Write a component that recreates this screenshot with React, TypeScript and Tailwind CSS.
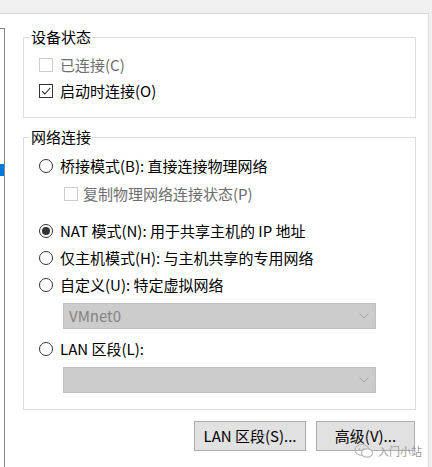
import React from "react";

const FONT = { fontFamily: '"Noto Sans CJK SC", "Noto Sans", sans-serif' };

function Check({ checked, disabled }: { checked?: boolean; disabled?: boolean }) {
  return (
    <div
      className={
        "w-[14px] h-[14px] shrink-0 bg-white border flex items-center justify-center " +
        (disabled ? "border-[#cccccc]" : "border-[#333333]")
      }
    >
      {checked && (
        <svg width="12" height="12" viewBox="0 0 12 12">
          <path d="M2 6.2 L4.8 9 L10.2 3" fill="none" stroke="#222" strokeWidth="1.1" />
        </svg>
      )}
    </div>
  );
}

function Radio({ checked }: { checked?: boolean }) {
  return (
    <div className="w-[14px] h-[14px] shrink-0 rounded-full bg-white border border-[#333333] flex items-center justify-center">
      {checked && <div className="w-[8px] h-[8px] rounded-full bg-[#333333]" />}
    </div>
  );
}

function Select({ text }: { text?: string }) {
  return (
    <div className="ml-[24px] w-[313px] h-[26px] bg-[#cccccc] border border-[#bfbfbf] flex items-center justify-between pl-[5px] pr-[6px]">
      <span className="text-[#838383] text-[15px] leading-[18px]">{text}</span>
      <svg width="10" height="6" viewBox="0 0 10 6">
        <path d="M0.5 0.5 L5 5 L9.5 0.5" fill="none" stroke="#a8a8a8" strokeWidth="1" />
      </svg>
    </div>
  );
}

function Group({ title, className, children }: { title: string; className: string; children: React.ReactNode }) {
  return (
    <div className={"relative border border-[#dcdcdc] pl-[15px] " + className}>
      <div className="absolute left-[6px] top-[-10px] bg-white px-[1px] text-[15px] leading-[18px] text-black">
        {title}
      </div>
      {children}
    </div>
  );
}

export default function App() {
  return (
    <div className="w-[432px] h-[467px] bg-[#f0f0f0] overflow-hidden relative" style={FONT}>
      <div className="mt-[13px] w-[429px] h-[454px] bg-white border-t border-r border-[#dadada] flex">
        {/* left list edge */}
        <div className="w-[5px] mt-[14px] border-t border-r border-[#828790] flex flex-col">
          <div className="mt-[135px] w-[4px] h-[12px] bg-[#0078d7]" />
        </div>
        <div className="ml-[18px] w-[393px] pt-[23px] flex flex-col text-[15px] leading-[18px] text-black">
          <Group title="设备状态" className="h-[81px]">
            <div className="mt-[14px] h-[26px] flex items-center">
              <Check disabled />
              <span className="ml-[7px] text-[#6d6d6d]">已连接(C)</span>
            </div>
            <div className="h-[26px] flex items-center">
              <Check checked />
              <span className="ml-[7px]">启动时连接(O)</span>
            </div>
          </Group>

          <Group title="网络连接" className="mt-[19px] h-[273px]">
            <div className="mt-[15px] h-[26px] flex items-center">
              <Radio />
              <span className="ml-[7px]">桥接模式(B): 直接连接物理网络</span>
            </div>
            <div className="mt-[2px] h-[26px] flex items-center pl-[25px]">
              <Check disabled />
              <span className="ml-[5px] text-[#6d6d6d]">复制物理网络连接状态(P)</span>
            </div>
            <div className="mt-[10px] h-[27px] flex items-center">
              <Radio checked />
              <span className="ml-[7px]">NAT 模式(N): 用于共享主机的 IP 地址</span>
            </div>
            <div className="h-[27px] flex items-center">
              <Radio />
              <span className="ml-[7px]">仅主机模式(H): 与主机共享的专用网络</span>
            </div>
            <div className="h-[27px] flex items-center">
              <Radio />
              <span className="ml-[7px]">自定义(U): 特定虚拟网络</span>
            </div>
            <div className="mt-[5px]">
              <Select text="VMnet0" />
            </div>
            <div className="mt-[7px] h-[26px] flex items-center">
              <Radio />
              <span className="ml-[7px]">LAN 区段(L):</span>
            </div>
            <div className="mt-[5px]">
              <Select />
            </div>
          </Group>

          <div className="mt-[11px] flex justify-end gap-[10px] pr-[1px]">
            <div className="w-[112px] h-[30px] bg-[#e1e1e1] border border-[#adadad] flex items-center justify-center">
              LAN 区段(S)...
            </div>
            <div className="w-[99px] h-[30px] bg-[#e1e1e1] border border-[#adadad] flex items-center justify-center">
              高级(V)...
            </div>
          </div>
        </div>
      </div>

      {/* watermark */}
      <div className="absolute left-[354px] top-[443px] flex items-center gap-[4px]">
        <svg width="20" height="16" viewBox="0 0 20 16">
          <ellipse cx="8" cy="7" rx="7" ry="5.5" fill="none" stroke="#b8b8b8" strokeWidth="1.2" />
          <ellipse cx="13" cy="10" rx="5.5" ry="4.2" fill="white" stroke="#b8b8b8" strokeWidth="1.2" />
          <circle cx="5.5" cy="6" r="0.9" fill="#b8b8b8" />
          <circle cx="9.5" cy="6" r="0.9" fill="#b8b8b8" />
        </svg>
        <span className="text-[11px] leading-[14px] text-[#9a9a9a]">入门小站</span>
      </div>
    </div>
  );
}
